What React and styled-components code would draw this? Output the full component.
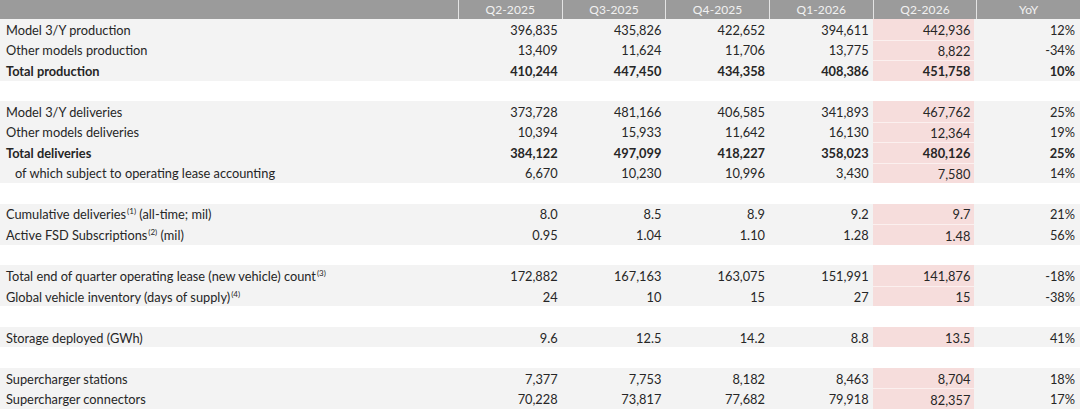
import React from 'react';
import styled, { createGlobalStyle } from 'styled-components';

const GlobalStyle = createGlobalStyle`
  html, body {
    margin: 0;
    padding: 0;
    background: #ffffff;
  }
  body {
    font-family: Lato, "Liberation Sans", Arial, sans-serif;
    color: #262626;
  }
`;

const UI = {
  Table: styled.div`
    width: 1080px;
    height: 409px;
    display: grid;
    grid-template-rows: 19px repeat(19, 1fr);
    overflow: hidden;
  `,
  Row: styled.div`
    display: grid;
    grid-template-columns: 458px repeat(6, 1fr);
    background: ${p => (p.blank ? '#ffffff' : '#f3f3f3')};
    font-size: 12.8px;
    font-weight: ${p => (p.bold ? 700 : 400)};
  `,
  HeadRow: styled.div`
    display: grid;
    grid-template-columns: 458px repeat(6, 1fr);
    background: #9b9b9b;
    color: #f1f1f1;
    font-size: 12px;
  `,
  HeadCell: styled.div`
    display: flex;
    align-items: center;
    justify-content: center;
    border-left: ${p => (p.first ? 'none' : '1px solid #e4e4e4')};
    letter-spacing: 0.1px;
  `,
  Label: styled.div`
    display: flex;
    align-items: center;
    padding-left: ${p => (p.indent ? '15px' : '6px')};
    padding-top: 1px;
    white-space: nowrap;
  `,
  Value: styled.div`
    display: flex;
    align-items: center;
    justify-content: flex-end;
    padding-right: ${p => (p.last ? '5px' : '4px')};
    padding-top: 1px;
    background: ${p => (p.highlight ? '#f6dddc' : 'transparent')};
    border-top: ${p => (p.highlight && !p.groupTop ? '1px solid #fbf0ef' : 'none')};
    margin-right: ${p => (p.highlight ? '2px' : '0')};
    box-sizing: border-box;
  `,
  Sup: styled.sup`
    font-size: 8px;
    line-height: 0;
    vertical-align: 5px;
    margin-left: 1px;
  `,
};

const quarters = ['Q2-2025', 'Q3-2025', 'Q4-2025', 'Q1-2026', 'Q2-2026', 'YoY'];

const rows = [
  { label: 'Model 3/Y production', values: ['396,835', '435,826', '422,652', '394,611', '442,936', '12%'], top: true },
  { label: 'Other models production', values: ['13,409', '11,624', '11,706', '13,775', '8,822', '-34%'] },
  { label: 'Total production', bold: true, values: ['410,244', '447,450', '434,358', '408,386', '451,758', '10%'] },
  { blank: true },
  { label: 'Model 3/Y deliveries', values: ['373,728', '481,166', '406,585', '341,893', '467,762', '25%'], top: true },
  { label: 'Other models deliveries', values: ['10,394', '15,933', '11,642', '16,130', '12,364', '19%'] },
  { label: 'Total deliveries', bold: true, values: ['384,122', '497,099', '418,227', '358,023', '480,126', '25%'] },
  { label: 'of which subject to operating lease accounting', indent: true, values: ['6,670', '10,230', '10,996', '3,430', '7,580', '14%'] },
  { blank: true },
  { label: 'Cumulative deliveries', sup: '(1)', after: ' (all-time; mil)', values: ['8.0', '8.5', '8.9', '9.2', '9.7', '21%'], top: true },
  { label: 'Active FSD Subscriptions', sup: '(2)', after: ' (mil)', values: ['0.95', '1.04', '1.10', '1.28', '1.48', '56%'] },
  { blank: true },
  { label: 'Total end of quarter operating lease (new vehicle) count', sup: '(3)', values: ['172,882', '167,163', '163,075', '151,991', '141,876', '-18%'], top: true },
  { label: 'Global vehicle inventory (days of supply)', sup: '(4)', values: ['24', '10', '15', '27', '15', '-38%'] },
  { blank: true },
  { label: 'Storage deployed (GWh)', values: ['9.6', '12.5', '14.2', '8.8', '13.5', '41%'], top: true },
  { blank: true },
  { label: 'Supercharger stations', values: ['7,377', '7,753', '8,182', '8,463', '8,704', '18%'], top: true },
  { label: 'Supercharger connectors', values: ['70,228', '73,817', '77,682', '79,918', '82,357', '17%'] },
];

export default function App() {
  return (
    <>
      <GlobalStyle />
      <UI.Table>
        <UI.HeadRow>
          <UI.HeadCell first />
          {quarters.map(q => (
            <UI.HeadCell key={q}>{q}</UI.HeadCell>
          ))}
        </UI.HeadRow>
        {rows.map((row, i) =>
          row.blank ? (
            <UI.Row key={i} blank />
          ) : (
            <UI.Row key={i} bold={row.bold}>
              <UI.Label indent={row.indent}>
                <span>
                  {row.label}
                  {row.sup && <UI.Sup>{row.sup}</UI.Sup>}
                  {row.after}
                </span>
              </UI.Label>
              {row.values.map((v, j) => (
                <UI.Value
                  key={j}
                  highlight={j === 4}
                  groupTop={row.top}
                  last={j === 5}
                >
                  {v}
                </UI.Value>
              ))}
            </UI.Row>
          )
        )}
      </UI.Table>
    </>
  );
}
